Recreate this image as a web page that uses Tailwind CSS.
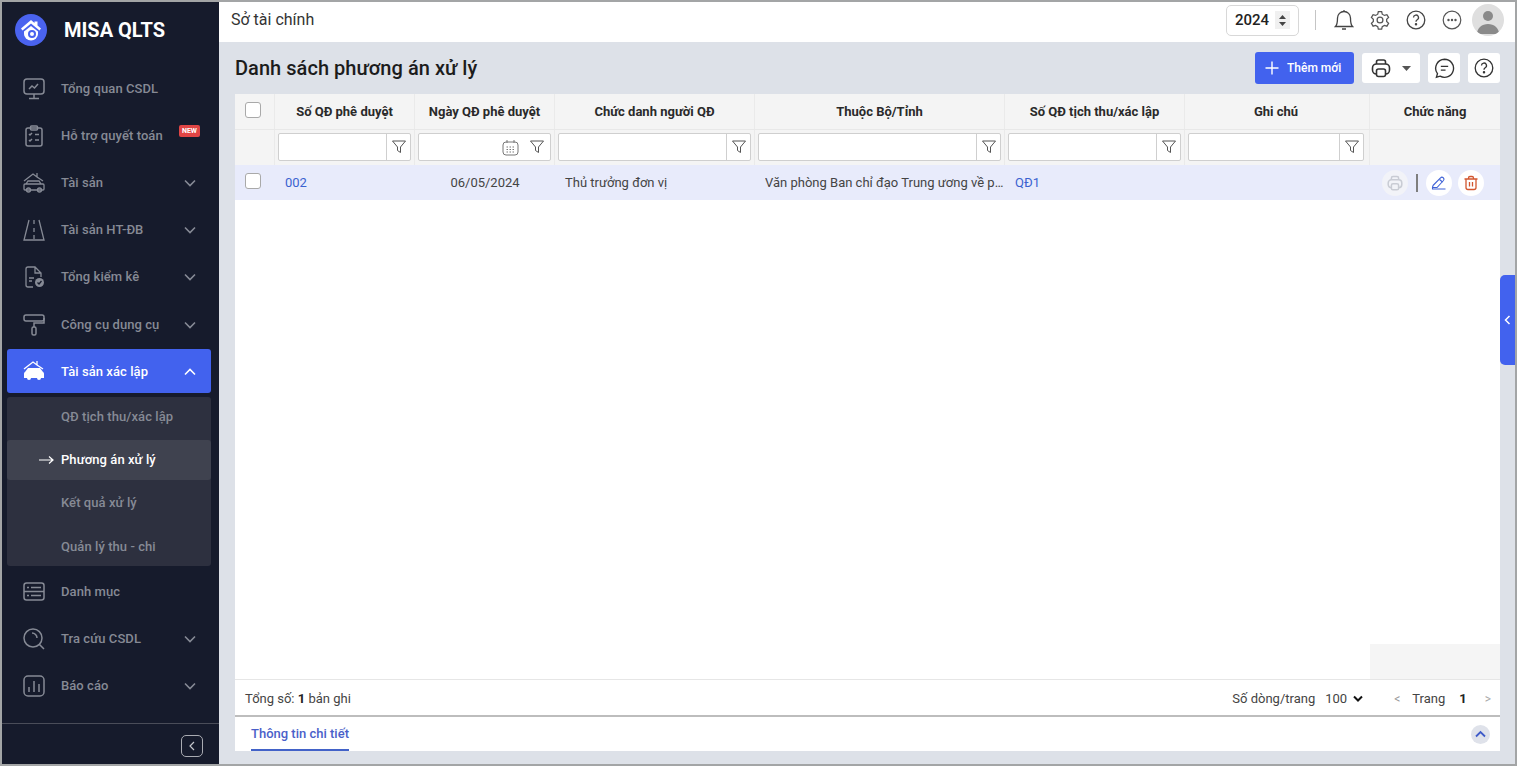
<!DOCTYPE html>
<html><head><meta charset="utf-8"><script src="https://cdn.jsdelivr.net/npm/@tailwindcss/browser@4"></script></head>
<body class="m-0 overflow-hidden">
<div class="w-[1517px] h-[766px] border-2 border-[#a3a5a6] flex font-['Roboto',sans-serif] overflow-hidden bg-[#dde1e8] relative">
  <!-- Sidebar -->
  <aside class="w-[217px] h-full bg-[#161b2c] flex flex-col shrink-0 text-[13px] font-medium text-[#868a95] tracking-[0.07px]">
    <div class="h-[56px] flex items-center pl-[13px] shrink-0">
      <div class="w-8 h-8 rounded-full bg-[#4a63ef] flex items-center justify-center">
        <svg width="26" height="26" viewBox="0 0 26 26"><path d="M3 11.500 13 3l3.500 3V4.500h3V8.500L23 11.500l-1.500 2L13 6.500 4.500 13.500z" fill="#fff"/><path d="M6 14.500 13 9l7 5.500V17a7 6.500 0 0 1-14 0z" fill="#fff"/><circle cx="14" cy="17" r="4" fill="#4a63ef"/><circle cx="14" cy="17" r="2" fill="#fff"/></svg>
      </div>
      <span class="ml-[17px] text-[20px] font-bold text-white tracking-normal">MISA QLTS</span>
    </div>
    <nav class="flex flex-col pl-[5px] pr-[8px]">
      <div class="h-[47px] flex items-center pl-4 mt-[7px]"><svg class="w-[22px] h-[22px] shrink-0" viewBox="0 0 22 22" fill="none" stroke="#868a95" stroke-width="1.500"><rect x="1" y="1" width="20" height="15" rx="3"/><path d="M11 16v4M6 20.500h10M6 11l3-3 2.500 2L15 6"/></svg><span class="ml-4">Tổng quan CSDL</span></div>
      <div class="h-[47px] flex items-center pl-4 relative"><svg class="w-[22px] h-[22px] shrink-0" viewBox="0 0 22 22" fill="none" stroke="#868a95" stroke-width="1.500"><rect x="3" y="3" width="16" height="18" rx="2"/><rect x="7.500" y="1" width="7" height="4" rx="1"/><path d="M6 9l1 1 2-2M12 9.500h4M6 15l1 1 2-2M12 15h4"/></svg><span class="ml-4">Hỗ trợ quyết toán</span><span class="absolute left-[172px] top-[13px] w-[21px] h-[12px] rounded-[2px] bg-[#e04545] text-white text-[7px] font-bold flex items-center justify-center tracking-normal">NEW</span></div>
      <div class="h-[47px] flex items-center pl-4"><svg class="w-[22px] h-[22px] shrink-0" viewBox="0 0 22 22" fill="none" stroke="#868a95" stroke-width="1.300"><path d="M1 9l9-7 4 3V1M14 5l6 4M3 12l2-3h11l2 3M2 12h18a1 1 0 0 1 1 1v4a1 1 0 0 1-1 1H2a1 1 0 0 1-1-1v-4a1 1 0 0 1 1-1z"/><circle cx="5.500" cy="18" r="2"/><circle cx="16.500" cy="18" r="2"/></svg><span class="ml-4 flex-1">Tài sản</span><svg class="w-3 h-3 mr-[15px]" viewBox="0 0 12 12" fill="none" stroke="#868a95" stroke-width="1.600"><path d="M1 3.500l5 5 5-5"/></svg></div>
      <div class="h-[47px] flex items-center pl-4"><svg class="w-[22px] h-[22px] shrink-0" viewBox="0 0 22 22" fill="none" stroke="#868a95" stroke-width="1.300"><path d="M6 1 1 21h20L16 1M11 1v4M11 9v4M11 16v4"/></svg><span class="ml-4 flex-1">Tài sản HT-ĐB</span><svg class="w-3 h-3 mr-[15px]" viewBox="0 0 12 12" fill="none" stroke="#868a95" stroke-width="1.600"><path d="M1 3.500l5 5 5-5"/></svg></div>
      <div class="h-[47px] flex items-center pl-4"><svg class="w-[22px] h-[22px] shrink-0" viewBox="0 0 22 22" fill="none" stroke="#868a95" stroke-width="1.300"><path d="M10 21H5a2 2 0 0 1-2-2V3a2 2 0 0 1 2-2h7l6 6v4M12 1v6h6M6 12h5M6 15h3"/><circle cx="16.500" cy="16.500" r="4.500" fill="#868a95" stroke="none"/><path d="M14.500 16.500l1.500 1.500 2.500-3" stroke="#161b2c"/></svg><span class="ml-4 flex-1">Tổng kiểm kê</span><svg class="w-3 h-3 mr-[15px]" viewBox="0 0 12 12" fill="none" stroke="#868a95" stroke-width="1.600"><path d="M1 3.500l5 5 5-5"/></svg></div>
      <div class="h-[49px] flex items-center pl-4 pt-[1px]"><svg class="w-[22px] h-[22px] shrink-0" viewBox="0 0 22 22" fill="none" stroke="#868a95" stroke-width="1.500"><rect x="1" y="1" width="20" height="6" rx="2"/><path d="M21 4h0v5H11v4"/><rect x="9" y="13" width="4" height="8" rx="1.500"/></svg><span class="ml-4 flex-1">Công cụ dụng cụ</span><svg class="w-3 h-3 mr-[15px]" viewBox="0 0 12 12" fill="none" stroke="#868a95" stroke-width="1.600"><path d="M1 3.500l5 5 5-5"/></svg></div>
      <div class="h-[44px] flex items-center pl-4 pt-[1px] rounded-[3px] bg-[#4262ee] text-white"><svg class="w-[22px] h-[22px] shrink-0 -mt-[1px]" viewBox="0 0 22 22" fill="none"><path d="M1 9l9-7 4 3V1M14 5l6 4" stroke="#fff" stroke-width="1.300"/><path d="M2 12l3-4h12l3 4a2 2 0 0 1 1 2v4h-3a2 2 0 0 1-4 0H8a2 2 0 0 1-4 0H1v-4a2 2 0 0 1 1-2z" fill="#fff"/></svg><span class="ml-4 flex-1">Tài sản xác lập</span><svg class="w-3 h-3 mr-[15px]" viewBox="0 0 12 12" fill="none" stroke="#fff" stroke-width="1.600"><path d="M1 8.500l5-5 5 5"/></svg></div>
      <div class="mt-1 rounded-[3px] bg-[#2d303f] flex flex-col h-[169px]">
        <div class="h-[43px] flex items-center pl-[54px] pb-[4px]">QĐ tịch thu/xác lập</div>
        <div class="h-[40px] flex items-center rounded-[3px] bg-[#3f424f] text-white relative pl-[54px]"><svg class="absolute left-[32px] top-[14px] w-[15px] h-3" viewBox="0 0 15 12" fill="none" stroke="#fff" stroke-width="1.200"><path d="M0 6h14M10 2.500 14 6l-4 3.500"/></svg>Phương án xử lý</div>
        <div class="h-[44px] flex items-center pl-[54px] pt-[2px]">Kết quả xử lý</div>
        <div class="h-[42px] flex items-center pl-[54px] pt-[4px]">Quản lý thu - chi</div>
      </div>
      <div class="h-[47px] flex items-center pl-4 mt-[2px]"><svg class="w-[22px] h-[22px] shrink-0" viewBox="0 0 22 22" fill="none" stroke="#868a95" stroke-width="1.500"><rect x="1" y="2" width="20" height="17" rx="2.500"/><path d="M1 10.500h20M4 6.500h2M8 6.500h10M4 14.500h2M8 14.500h10"/></svg><span class="ml-4">Danh mục</span></div>
      <div class="h-[47px] flex items-center pl-4"><svg class="w-[22px] h-[22px] shrink-0" viewBox="0 0 22 22" fill="none" stroke="#868a95" stroke-width="1.500"><circle cx="10" cy="10" r="9"/><path d="M16 16l5 5M9 5a5 5 0 0 1 5 5"/></svg><span class="ml-4 flex-1">Tra cứu CSDL</span><svg class="w-3 h-3 mr-[15px]" viewBox="0 0 12 12" fill="none" stroke="#868a95" stroke-width="1.600"><path d="M1 3.500l5 5 5-5"/></svg></div>
      <div class="h-[47px] flex items-center pl-4"><svg class="w-[22px] h-[22px] shrink-0" viewBox="0 0 22 22" fill="none" stroke="#868a95" stroke-width="1.500"><rect x="1" y="1" width="20" height="20" rx="4"/><path d="M6 12v5M11 6v11M16 9v8"/></svg><span class="ml-4 flex-1">Báo cáo</span><svg class="w-3 h-3 mr-[15px]" viewBox="0 0 12 12" fill="none" stroke="#868a95" stroke-width="1.600"><path d="M1 3.500l5 5 5-5"/></svg></div>
    </nav>
    <div class="mt-auto h-[41px] border-t border-[#4a4d59] flex items-center justify-end pr-[16px] pt-[3px] shrink-0">
      <div class="w-[22px] h-[22px] rounded-[5px] border border-[#a9abb2] flex items-center justify-center"><svg width="10" height="12" viewBox="0 0 10 12" fill="none" stroke="#c5c7cc" stroke-width="1.200"><path d="M7 2 3 6l4 4"/></svg></div>
    </div>
  </aside>
  <!-- Main -->
  <main class="flex-1 min-w-0 flex flex-col text-[13px] text-[#333]">
    <header class="h-[40px] bg-white flex items-center pl-3 pr-[11px] pb-[4px] shrink-0">
      <span class="text-[16px] text-[#333]">Sở tài chính</span>
      <div class="ml-auto w-[73px] h-[31px] border border-[#d8d8d8] rounded-[5px] flex items-center pl-2 text-[15px] font-medium text-[#222]">2024<span class="ml-[6px] w-[15px] h-[18px] bg-[#f0f0f0] flex items-center justify-center"><svg width="9" height="13" viewBox="0 0 9 13" fill="#444"><path d="M4.500 1 8 5H1zM4.500 12 1 8h7z"/></svg></span></div>
      <div class="w-px h-5 bg-[#c5c5c5] ml-[16px] mr-[18px]"></div>
      <svg class="w-[20px] h-[22px]" viewBox="0 0 20 22" fill="none" stroke="#444" stroke-width="1.300"><path d="M1.500 17.500c2-2 2-4.500 2-8.500a6.500 6.500 0 0 1 13 0c0 4 0 6.500 2 8.500zM8 20h4M10 1v1.500"/></svg>
      <svg class="w-[20px] h-[20px] ml-4" viewBox="0 0 24 24" fill="none" stroke="#555" stroke-width="1.500"><circle cx="12" cy="12" r="3.500"/><path d="M10 2h4l.7 3 2.600 1.500 3-.9 2 3.400-2.300 2.100v2.800l2.300 2.100-2 3.400-3-.9-2.600 1.500-.7 3h-4l-.7-3-2.600-1.500-3 .9-2-3.400 2.300-2.100v-2.800L1.700 9l2-3.400 3 .9L9.300 5z"/></svg>
      <svg class="w-[20px] h-[20px] ml-4" viewBox="0 0 20 20" fill="none" stroke="#444" stroke-width="1.300"><circle cx="10" cy="10" r="8.800"/><path d="M7.500 7.500a2.500 2.500 0 1 1 3.700 2.200c-.8.500-1.200 1-1.200 2"/><circle cx="10" cy="14.300" r=".6" fill="#444"/></svg>
      <svg class="w-[20px] h-[20px] ml-4" viewBox="0 0 20 20" fill="none" stroke="#555" stroke-width="1.200"><circle cx="10" cy="10" r="8.800"/><circle cx="6.500" cy="10" r=".6" fill="#555"/><circle cx="10" cy="10" r=".6" fill="#555"/><circle cx="13.500" cy="10" r=".6" fill="#555"/></svg>
      <div class="w-8 h-8 rounded-full bg-[#dfdfdf] ml-[10px] overflow-hidden flex items-center justify-center"><svg width="32" height="32" viewBox="0 0 32 32" fill="#8a8a8a"><circle cx="16" cy="12" r="5"/><path d="M5 30c0-6 5-10 11-10s11 4 11 10z"/></svg></div>
    </header>
    <div class="flex-1 min-h-0 flex flex-col pl-4 pr-[15px]">
      <div class="h-[52px] flex items-center shrink-0">
        <h1 class="text-[20px] font-medium text-[#1c1c1c] tracking-[0.04px]">Danh sách phương án xử lý</h1>
        <button class="ml-auto w-[99px] h-8 rounded-[3px] bg-[#4262ee] text-white text-[12px] font-medium flex items-center pl-[9px]"><svg class="w-[16px] h-[16px] mr-[7px]" viewBox="0 0 16 16" fill="none" stroke="#fff" stroke-width="1.400"><path d="M8 1.500v13M1.500 8h13"/></svg>Thêm mới</button>
        <div class="ml-2 w-[58px] h-[30px] rounded-[3px] bg-white flex items-center pl-[9px]"><svg class="w-[20px] h-[20px]" viewBox="0 0 20 20" fill="none" stroke="#333" stroke-width="1.600"><path d="M5.500 6V4a2 2 0 0 1 2-2h5a2 2 0 0 1 2 2v2"/><rect x="1.500" y="6" width="17" height="10" rx="4"/><rect x="5.500" y="11" width="9" height="7.500" rx="2" fill="#fff"/></svg><svg class="ml-[11px]" width="9" height="5" viewBox="0 0 9 5" fill="#555"><path d="M0 0h9L4.500 5z"/></svg></div>
        <div class="ml-2 w-8 h-[30px] rounded-[3px] bg-white flex items-center justify-center"><svg width="21" height="21" viewBox="0 0 20 20" fill="none" stroke="#333" stroke-width="1.300"><path d="M10 1.200a8.600 8.600 0 1 1-4.200 16.100l-3.500 1 1-3.400A8.600 8.600 0 0 1 10 1.200zM6.500 8h7M6.500 11.500h4.500"/></svg></div>
        <div class="ml-2 w-8 h-[30px] rounded-[3px] bg-white flex items-center justify-center"><svg width="20" height="20" viewBox="0 0 20 20" fill="none" stroke="#333" stroke-width="1.300"><circle cx="10" cy="10" r="8.800"/><path d="M7.500 7.500a2.500 2.500 0 1 1 3.700 2.200c-.8.500-1.200 1-1.200 2"/><circle cx="10" cy="14.300" r=".6" fill="#333"/></svg></div>
      </div>
      <div class="flex-1 min-h-0 bg-white flex flex-col">
        <!-- Header row -->
        <div class="grid grid-cols-[40px_140px_140px_200px_250px_180px_185px_130px] shrink-0 h-[36px] bg-[#f4f4f4] border-b border-[#e8e8e8] text-[13px] font-bold text-[#2a2a2a]">
          <div class="flex items-center justify-center border-r border-[#eaeaea] pr-[4px] pb-[3px]"><span class="w-4 h-4 border border-[#a9a9a9] bg-white rounded-[3px]"></span></div>
          <div class="flex items-center justify-center border-r border-[#eaeaea]">Số QĐ phê duyệt</div>
          <div class="flex items-center justify-center border-r border-[#eaeaea]">Ngày QĐ phê duyệt</div>
          <div class="flex items-center justify-center border-r border-[#eaeaea]">Chức danh người QĐ</div>
          <div class="flex items-center justify-center border-r border-[#eaeaea]">Thuộc Bộ/Tỉnh</div>
          <div class="flex items-center justify-center border-r border-[#eaeaea]">Số QĐ tịch thu/xác lập</div>
          <div class="flex items-center justify-center border-r border-[#eaeaea] pr-[2px]">Ghi chú</div>
          <div class="flex items-center justify-center">Chức năng</div>
        </div>
        <!-- Filter row -->
        <div class="grid grid-cols-[40px_140px_140px_200px_250px_180px_185px_130px] shrink-0 h-[35px] bg-[#f4f4f4]">
          <div class="border-r border-[#eaeaea]"></div>
          <div class="border-r border-[#eaeaea] pl-[3px] pr-[3px] pt-[3px]"><div class="h-[28px] bg-white border border-[#cfcfcf] rounded-[2px] flex justify-end"><span class="w-[24px] border-l border-[#cfcfcf] flex items-center justify-center"><svg width="14" height="14" viewBox="0 0 14 14" fill="none" stroke="#555" stroke-width="1"><path d="M.5 1h13L8.500 7v5.500l-3-2V7z"/></svg></span></div></div>
          <div class="border-r border-[#eaeaea] pl-[3px] pr-[3px] pt-[3px]"><div class="h-[28px] bg-white border border-[#cfcfcf] rounded-[2px] flex justify-end items-center"><svg class="mr-[5px]" width="17" height="17" viewBox="0 0 17 17" fill="none" stroke="#777" stroke-width="1"><rect x="1" y="3" width="15" height="13" rx="3"/><path d="M5 1v3M12 1v3"/><path d="M4.500 8h8M4.500 10.500h8M4.500 13h8" stroke-dasharray="1.500 1.500"/></svg><span class="w-[26px] flex items-center justify-center"><svg width="14" height="14" viewBox="0 0 14 14" fill="none" stroke="#555" stroke-width="1"><path d="M.5 1h13L8.500 7v5.500l-3-2V7z"/></svg></span></div></div>
          <div class="border-r border-[#eaeaea] pl-[3px] pr-[3px] pt-[3px]"><div class="h-[28px] bg-white border border-[#cfcfcf] rounded-[2px] flex justify-end"><span class="w-[24px] border-l border-[#cfcfcf] flex items-center justify-center"><svg width="14" height="14" viewBox="0 0 14 14" fill="none" stroke="#555" stroke-width="1"><path d="M.5 1h13L8.500 7v5.500l-3-2V7z"/></svg></span></div></div>
          <div class="border-r border-[#eaeaea] pl-[3px] pr-[3px] pt-[3px]"><div class="h-[28px] bg-white border border-[#cfcfcf] rounded-[2px] flex justify-end"><span class="w-[24px] border-l border-[#cfcfcf] flex items-center justify-center"><svg width="14" height="14" viewBox="0 0 14 14" fill="none" stroke="#555" stroke-width="1"><path d="M.5 1h13L8.500 7v5.500l-3-2V7z"/></svg></span></div></div>
          <div class="border-r border-[#eaeaea] pl-[3px] pr-[3px] pt-[3px]"><div class="h-[28px] bg-white border border-[#cfcfcf] rounded-[2px] flex justify-end"><span class="w-[24px] border-l border-[#cfcfcf] flex items-center justify-center"><svg width="14" height="14" viewBox="0 0 14 14" fill="none" stroke="#555" stroke-width="1"><path d="M.5 1h13L8.500 7v5.500l-3-2V7z"/></svg></span></div></div>
          <div class="border-r border-[#eaeaea] pl-[3px] pr-[5px] pt-[3px]"><div class="h-[28px] bg-white border border-[#cfcfcf] rounded-[2px] flex justify-end"><span class="w-[24px] border-l border-[#cfcfcf] flex items-center justify-center"><svg width="14" height="14" viewBox="0 0 14 14" fill="none" stroke="#555" stroke-width="1"><path d="M.5 1h13L8.500 7v5.500l-3-2V7z"/></svg></span></div></div>
          <div></div>
        </div>
        <!-- Data row -->
        <div class="grid grid-cols-[40px_140px_140px_200px_250px_180px_185px_130px] shrink-0 h-[35px] bg-[#e8ebfb] text-[13px] text-[#444]">
          <div class="flex items-center justify-center pr-[4px] pb-[3px]"><span class="w-4 h-4 border border-[#a9a9a9] bg-white rounded-[3px]"></span></div>
          <div class="flex items-center pl-[10px] text-[#3a62d0]">002</div>
          <div class="flex items-center justify-center">06/05/2024</div>
          <div class="flex items-center pl-[10px]">Thủ trưởng đơn vị</div>
          <div class="flex items-center pl-[10px] min-w-0"><span class="truncate">Văn phòng Ban chỉ đạo Trung ương về phòng chống tham nhũng</span></div>
          <div class="flex items-center pl-[10px] text-[#3a62d0]">QĐ1</div>
          <div></div>
          <div class="flex items-center pl-[12px]">
            <span class="w-[26px] h-[26px] rounded-full bg-[#f2f3f8] flex items-center justify-center"><svg width="16" height="16" viewBox="0 0 20 20" fill="none" stroke="#c9ccd4" stroke-width="1.900"><path d="M5.500 6V4a2 2 0 0 1 2-2h5a2 2 0 0 1 2 2v2"/><rect x="1.500" y="6" width="17" height="10" rx="4"/><rect x="5.500" y="11" width="9" height="7.500" rx="2" fill="#f2f3f8"/></svg></span>
            <span class="w-[2px] h-[18px] bg-[#7e7e7e] ml-[8px] mr-[8px]"></span>
            <span class="w-[26px] h-[26px] rounded-full bg-white flex items-center justify-center"><svg width="16" height="16" viewBox="0 0 16 16" fill="none" stroke="#3f62d6" stroke-width="1.100"><path d="M2 10.500 9.500 3a1.800 1.800 0 0 1 3 2.500L6 12.500H1.500V14h13M2 10.500 1.500 12.500"/><path d="M8.500 4.500l3 2.500"/></svg></span>
            <span class="w-[26px] h-[26px] rounded-full bg-white flex items-center justify-center ml-[6px]"><svg width="16" height="16" viewBox="0 0 16 16" fill="none" stroke="#d2562f" stroke-width="1.300"><path d="M1.500 4h13M5.500 4V3a1.500 1.500 0 0 1 1.500-1.500h2A1.500 1.500 0 0 1 10.500 3v1M3 4v8.500A2 2 0 0 0 5 14.500h6a2 2 0 0 0 2-2V4M6.500 7v4.500M9.500 7v4.500"/></svg></span>
          </div>
        </div>
        <div class="flex-1 min-h-0 flex items-end justify-end"><div class="w-[130px] h-[35px] bg-[#f5f5f5]"></div></div>
        <!-- Footer -->
        <div class="h-[36px] shrink-0 border-t border-[#e6e6e6] flex items-center pl-[10px] pr-[9px] pt-[2px] text-[13px] text-[#444]">
          <span>Tổng số: <b class="font-bold text-[#222]">1</b> bản ghi</span>
          <span class="ml-auto">Số dòng/trang</span>
          <span class="ml-[10px]">100</span>
          <svg class="ml-[6px]" width="10" height="8" viewBox="0 0 10 8" fill="none" stroke="#111" stroke-width="2"><path d="M1 1.500 5 5.500 9 1.500"/></svg>
          <span class="ml-[31px] text-[#999] text-[12px]">&lt;</span>
          <span class="ml-[12px]">Trang</span>
          <span class="ml-[14px] font-bold text-[#222]">1</span>
          <span class="ml-[18px] text-[#aaa] text-[12px]">&gt;</span>
        </div>
        <div class="h-[36px] shrink-0 border-t-2 border-[#bdbdbd] flex items-center justify-between pl-4 pr-[10px]">
          <div class="h-full flex items-center pt-[1px] border-b-2 border-[#4262c8] text-[13px] font-medium text-[#4a5fc9]">Thông tin chi tiết</div>
          <span class="w-[19px] h-[19px] rounded-full bg-[#dfe2ea] flex items-center justify-center"><svg width="11" height="8" viewBox="0 0 11 8" fill="none" stroke="#3f5bc9" stroke-width="1.800"><path d="M1 6.500 5.500 2 10 6.500"/></svg></span>
        </div>
      </div>
      <div class="h-[13px] shrink-0"></div>
    </div>
  </main>
  <div class="absolute right-0 top-[273px] w-[15px] h-[90px] bg-[#4262ee] rounded-l-[5px] flex items-center justify-center"><svg width="7" height="10" viewBox="0 0 7 10" fill="none" stroke="#fff" stroke-width="1.500"><path d="M5.500 1 1.500 5l4 4"/></svg></div>
</div>
</body></html>
